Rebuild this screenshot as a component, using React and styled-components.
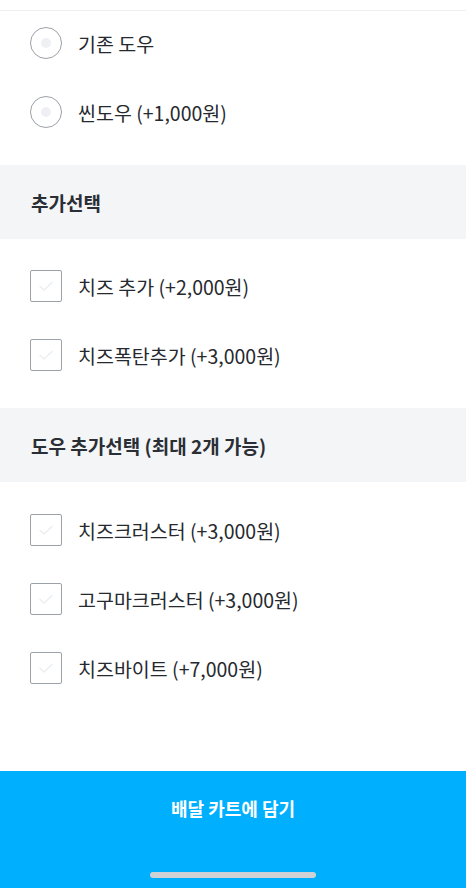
import React from 'react';
import styled, { createGlobalStyle } from 'styled-components';

const GlobalStyle = createGlobalStyle`
    * { box-sizing: border-box; }
    html, body {
        margin: 0;
        padding: 0;
        background: #fff;
        font-family: "Noto Sans CJK KR", "Noto Sans", sans-serif;
        color: #25282d;
    }
`;

const Page = styled.div`
    display: flex;
    flex-direction: column;
    min-height: 100vh;
    padding-top: 10px;
`, Divider = styled.div`
    height: 1px;
    background-color: #eeeff1;
`, Content = styled.div`
    flex: 1;
    display: flex;
    flex-direction: column;
`, Section = styled.div`
    display: flex;
    flex-direction: column;
    gap: 5px;
    padding: ${p => p.$top || 0}px 30px 21px;
`, Header = styled.div`
    height: 74px;
    display: flex;
    align-items: center;
    padding: 0 31px;
    background-color: #f4f5f7;
    font-size: 19px;
    font-weight: 700;
    color: #2a2e35;
`, Row = styled.label`
    height: 64px;
    display: flex;
    align-items: center;
    gap: 16px;
    font-size: 19.5px;
    color: #26292e;
`, Radio = styled.span`
    width: 32px;
    height: 32px;
    border-radius: 50%;
    border: 1.5px solid #9da1a8;
    display: flex;
    align-items: center;
    justify-content: center;
    flex-shrink: 0;
    &::after {
        content: '';
        width: 10px;
        height: 10px;
        border-radius: 50%;
        background-color: #eef0f4;
    }
`, Check = styled.span`
    width: 32px;
    height: 32px;
    border-radius: 2px;
    border: 1.5px solid #9da1a8;
    display: flex;
    align-items: center;
    justify-content: center;
    flex-shrink: 0;
`, BottomBar = styled.div`
    height: 117px;
    background-color: #00b0ff;
    display: flex;
    flex-direction: column;
    align-items: center;
`, CartButton = styled.button`
    width: 100%;
    height: 74px;
    border: none;
    background: transparent;
    color: #fff;
    font-family: inherit;
    font-size: 18px;
    font-weight: 700;
    padding: 0;
`, HomeIndicator = styled.div`
    margin-top: 27px;
    width: 166px;
    height: 6px;
    border-radius: 3px;
    background-color: #cfd1d4;
`;

const CheckMark = () => (
    <svg width="16" height="12" viewBox="0 0 16 12" fill="none">
        <path d="M2 6.5 L6 10 L14 2.5" stroke="#eceef1" strokeWidth="1.5" strokeLinecap="round" strokeLinejoin="round" />
    </svg>
);

const dough = ['기존 도우', '씬도우 (+1,000원)'];
const extras = ['치즈 추가 (+2,000원)', '치즈폭탄추가 (+3,000원)'];
const crusts = ['치즈크러스터 (+3,000원)', '고구마크러스터 (+3,000원)', '치즈바이트 (+7,000원)'];

export default function App() {
    return (
        <>
            <GlobalStyle />
            <Page>
                <Divider />
                <Content>
                    <Section>
                        {dough.map(d => (
                            <Row key={d}><Radio />{d}</Row>
                        ))}
                    </Section>
                    <Header>추가선택</Header>
                    <Section $top={15}>
                        {extras.map(d => (
                            <Row key={d}><Check><CheckMark /></Check>{d}</Row>
                        ))}
                    </Section>
                    <Header>도우 추가선택 (최대 2개 가능)</Header>
                    <Section $top={16}>
                        {crusts.map(d => (
                            <Row key={d}><Check><CheckMark /></Check>{d}</Row>
                        ))}
                    </Section>
                </Content>
                <BottomBar>
                    <CartButton>배달 카트에 담기</CartButton>
                    <HomeIndicator />
                </BottomBar>
            </Page>
        </>
    );
}
